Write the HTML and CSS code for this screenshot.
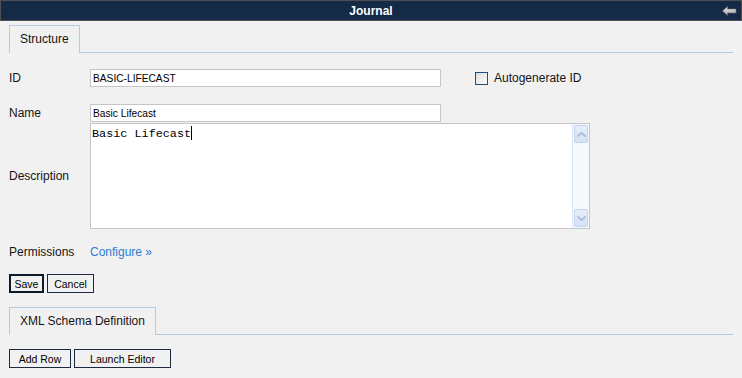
FILE: index.html
```html
<!DOCTYPE html>
<html lang="en">
<head>
<meta charset="UTF-8" />
<title>Journal</title>
<link rel="stylesheet" href="styles.css">
</head>
<body>
<div class="titlebar">
  <span class="title">Journal</span>
  <svg class="back" width="15" height="10" viewBox="0 0 15 10">
    <defs>
      <linearGradient id="ag" x1="0" y1="0" x2="0" y2="1">
        <stop offset="0" stop-color="#f2f2f2"/>
        <stop offset="1" stop-color="#9a9a9a"/>
      </linearGradient>
    </defs>
    <path d="M0.5 5 L5.5 0.5 L5.5 3 L14 3 L14 7 L5.5 7 L5.5 9.5 Z" fill="url(#ag)" stroke="#6d6d6d" stroke-width="0.6"/>
  </svg>
</div>

<div class="tabbar">
  <div class="tab">Structure</div>
  <div class="tab-fill"></div>
</div>

<div class="form">
  <div class="row row-id">
    <label class="label">ID</label>
    <input class="field" type="text" value="BASIC-LIFECAST">
    <span class="check"></span>
    <span class="check-label">Autogenerate ID</span>
  </div>
  <div class="row row-name">
    <label class="label">Name</label>
    <input class="field" type="text" value="Basic Lifecast">
  </div>
  <div class="row row-desc">
    <label class="label">Description</label>
    <div class="textbox">
      <div class="textarea">Basic Lifecast<span class="caret"></span></div>
      <div class="scrollbar">
        <div class="sb-btn">
          <svg width="9" height="5" viewBox="0 0 9 5"><path d="M0.5 4.5 L4.5 0.8 L8.5 4.5" fill="none" stroke="#a6bad6" stroke-width="1.6"/></svg>
        </div>
        <div class="sb-track"></div>
        <div class="sb-btn">
          <svg width="9" height="5" viewBox="0 0 9 5"><path d="M0.5 0.5 L4.5 4.2 L8.5 0.5" fill="none" stroke="#a6bad6" stroke-width="1.6"/></svg>
        </div>
      </div>
    </div>
  </div>
  <div class="row row-perm">
    <span class="label">Permissions</span>
    <a class="link" href="#">Configure &raquo;</a>
  </div>
  <div class="buttons">
    <button class="btn btn-focus btn-save">Save</button>
    <button class="btn btn-cancel">Cancel</button>
  </div>
</div>

<div class="tabbar tabbar-xml">
  <div class="tab">XML Schema Definition</div>
  <div class="tab-fill"></div>
</div>

<div class="buttons buttons-xml">
  <button class="btn btn-add">Add Row</button>
  <button class="btn btn-launch">Launch Editor</button>
</div>
</body>
</html>
```

FILE: styles.css
```css
body {
  margin: 0;
  background-color: #f1f1f1;
  font-family: "Liberation Sans", Arial, sans-serif;
  font-size: 12px;
  color: #141414;
}
.titlebar {
  height: 19px;
  background-color: #152a47;
  border: 1px solid #4f4f4f;
  display: flex;
  align-items: center;
  justify-content: center;
  position: relative;
}
.title {
  color: #ffffff;
  font-weight: bold;
  font-size: 12px;
}
.back {
  position: absolute;
  right: 4px;
  top: 5px;
}
.tabbar {
  display: flex;
  margin: 4px 9px 0 9px;
  height: 28px;
}
.tab {
  border: 1px solid #b3caea;
  border-bottom: none;
  padding: 0 10px;
  line-height: 27px;
  font-size: 12px;
}
.tab-fill {
  flex: 1;
  border-bottom: 1px solid #b3caea;
}
.form {
  padding-left: 9px;
}
.row {
  display: flex;
  align-items: center;
}
.label {
  width: 81px;
  flex: none;
  font-size: 12px;
}
.field {
  box-sizing: border-box;
  width: 351px;
  height: 18px;
  margin: 0;
  border: 1px solid #c6c6c6;
  background: #ffffff;
  font-family: "Liberation Sans", Arial, sans-serif;
  font-size: 10.2px;
  color: #000;
  padding: 0 2px;
  outline: none;
}
.row-id {
  margin-top: 16px;
}
.check {
  box-sizing: border-box;
  width: 13px;
  height: 13px;
  margin-left: 34px;
  border: 1px solid #1d4f7c;
  background: linear-gradient(135deg, #dcdcdc, #fbfbfb);
}
.check-label {
  margin-left: 6px;
  font-size: 12px;
}
.row-name {
  margin-top: 17px;
}
.row-desc {
  margin-top: 1px;
}
.textbox {
  box-sizing: border-box;
  width: 500px;
  height: 106px;
  border: 1px solid #c6c6c6;
  background: #ffffff;
  display: flex;
}
.textarea {
  flex: 1;
  padding: 2px 1px;
  font-family: "Liberation Mono", "Courier New", monospace;
  font-size: 11.8px;
  color: #000;
}
.caret {
  display: inline-block;
  width: 1px;
  height: 14px;
  background: #000;
  vertical-align: -3px;
}
.scrollbar {
  width: 17px;
  display: flex;
  flex-direction: column;
  background: #f5f8fd;
  border-left: 1px solid #dce7f6;
  padding: 1px;
  box-sizing: border-box;
}
.sb-btn {
  height: 16px;
  border: 1px solid #c3d6f0;
  border-radius: 2px;
  background: linear-gradient(#e6eefa, #d4e2f6);
  display: flex;
  align-items: center;
  justify-content: center;
}
.sb-track {
  flex: 1;
}
.row-perm {
  margin-top: 15px;
  height: 16px;
}
.link {
  color: #2c7dd2;
  text-decoration: none;
  font-size: 12px;
}
.buttons {
  display: flex;
  gap: 3px;
  margin-top: 14px;
}
.btn {
  box-sizing: border-box;
  height: 19px;
  margin: 0;
  padding: 0;
  background: #f1f1f1;
  border: 1px solid #1b2a40;
  font-family: "Liberation Sans", Arial, sans-serif;
  font-size: 10.5px;
  color: #000;
}
.btn-focus {
  border: 2px solid #0d1a2c;
}
.btn-save {
  width: 35px;
}
.btn-cancel {
  width: 47px;
}
.tabbar-xml {
  margin-top: 14px;
}
.buttons-xml {
  margin-left: 9px;
}
.btn-add {
  width: 62px;
}
.btn-launch {
  width: 97px;
}
```
